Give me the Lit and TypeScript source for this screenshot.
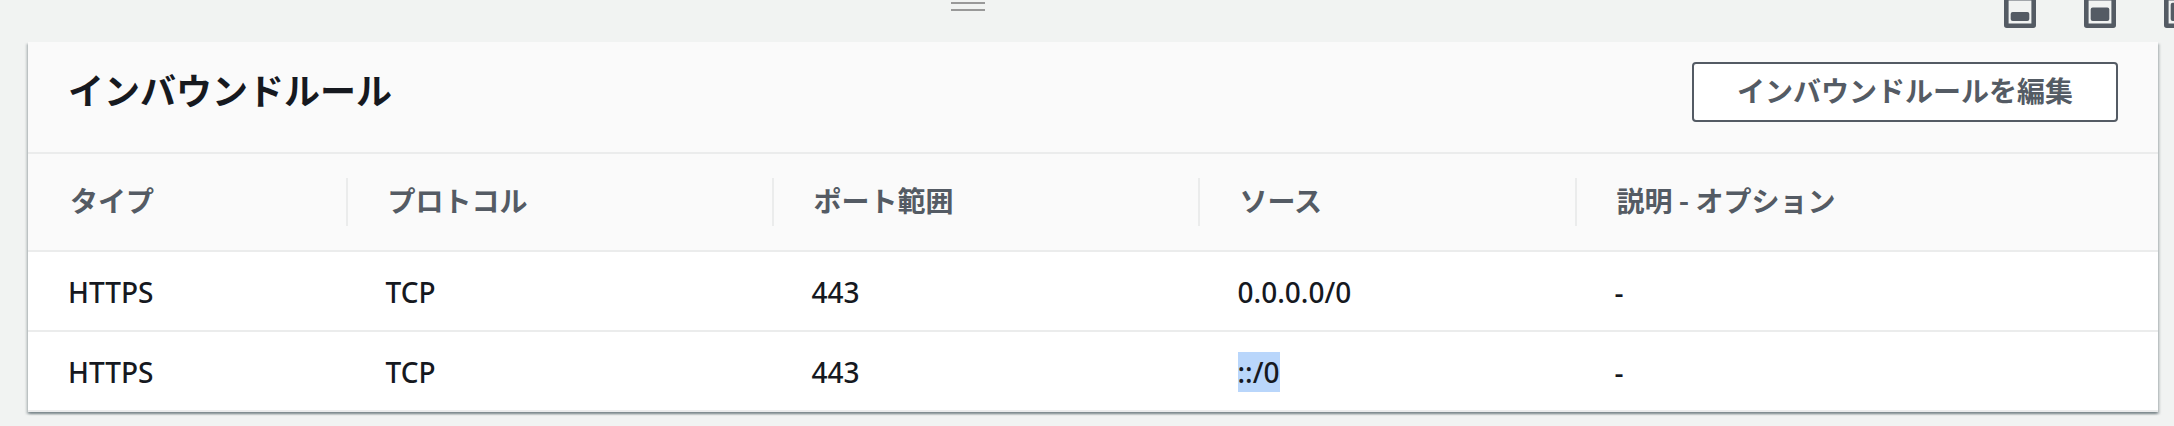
import { LitElement, html, css, svg } from "lit";
import { customElement, property } from "lit/decorators.js";

interface Rule {
  type: string;
  protocol: string;
  port: string;
  source: string;
  description: string;
  selected?: boolean;
}

const rules: Rule[] = [
  { type: "HTTPS", protocol: "TCP", port: "443", source: "0.0.0.0/0", description: "-" },
  { type: "HTTPS", protocol: "TCP", port: "443", source: "::/0", description: "-", selected: true },
];

const columns = ["タイプ", "プロトコル", "ポート範囲", "ソース", "説明 - オプション"];

/** Bar at the top of the split panel: drag handle and panel size buttons. */
@customElement("split-panel-bar")
export class SplitPanelBar extends LitElement {
  static styles = css`
    :host {
      display: grid;
      grid-template-columns: minmax(0, 1fr) 238px;
      height: 42px;
      overflow: hidden;
      background: #f1f3f2;
      position: relative;
      z-index: 1;
    }
    .handle {
      justify-self: center;
      width: 34px;
      height: 9px;
      margin: 2px 0 0;
      padding: 0;
      box-sizing: border-box;
      border: solid #999;
      border-width: 2px 0;
      border-radius: 0;
      background: none;
      cursor: row-resize;
    }
    .sizes {
      display: flex;
      align-items: flex-end;
      gap: 48px;
      height: 28px;
      padding-left: 68px;
      min-width: 0;
    }
    .size {
      flex: none;
      width: 32px;
      height: 32px;
      padding: 0;
      border: 0;
      background: none;
      color: #545b64;
      cursor: pointer;
    }
    .icon {
      display: block;
      width: 32px;
      height: 32px;
    }
  `;

  private sizeButton(label: string, top: number) {
    return html`<button class="size" type="button" aria-label=${label}>
      <svg class="icon" viewBox="0 0 32 32" aria-hidden="true">
        <rect x="2.3" y="2.3" width="27.4" height="27.4" rx="0.5" fill="none" stroke="currentColor" stroke-width="4.6" />
        ${svg`<rect x="6.7" y=${top} width="18.6" height=${25 - top} rx="2" fill="currentColor" />`}
      </svg>
    </button>`;
  }

  render() {
    return html`
      <button class="handle" type="button" aria-label="パネルのサイズを変更"></button>
      <div class="sizes">
        ${this.sizeButton("小", 16)} ${this.sizeButton("中", 11.4)} ${this.sizeButton("大", 6.8)}
      </div>
    `;
  }
}

/** Card that lists the inbound rules of a security group. */
@customElement("inbound-rules")
export class InboundRules extends LitElement {
  @property({ attribute: false }) rules: Rule[] = [];

  static styles = css`
    :host {
      display: block;
      background: #fff;
      box-shadow:
        0 2px 2px 0 rgba(0, 28, 36, 0.3),
        2px 2px 2px 0 rgba(0, 28, 36, 0.15),
        -2px 2px 2px 0 rgba(0, 28, 36, 0.15);
    }
    .header {
      display: flex;
      align-items: center;
      justify-content: space-between;
      padding: 20px 40px 30px;
      background: #fafafa;
      border-bottom: 2px solid #ebecec;
    }
    .title {
      margin: 0;
      font-size: 36px;
      line-height: 44px;
      font-weight: 700;
    }
    .edit {
      height: 60px;
      box-sizing: border-box;
      padding: 6px 43px 10px;
      border: 2px solid #545b64;
      border-radius: 4px;
      background: #fff;
      color: #545b64;
      font-family: "Noto Sans CJK JP", sans-serif;
      font-size: 28px;
      font-weight: 700;
      line-height: 40px;
      white-space: nowrap;
      cursor: pointer;
    }
    .table {
      width: 100%;
      table-layout: fixed;
      border-collapse: separate;
      border-spacing: 0;
    }
    .col-type {
      width: 15%;
    }
    .col-wide {
      width: 20%;
    }
    .col-source {
      width: 17.7%;
    }
    .head {
      padding: 24px 0;
      background: #fafafa;
      border-bottom: 2px solid #ebecec;
      color: #545b64;
      font-family: "Noto Sans CJK JP", sans-serif;
      font-weight: 700;
      text-align: left;
    }
    .label {
      display: block;
      height: 48px;
      padding: 0 40px;
      line-height: 44px;
      border-right: 2px solid #ebecec;
    }
    .head:first-child .label {
      padding-left: 42px;
    }
    .head:last-child .label {
      border-right: 0;
    }
    .cell {
      padding: 20px 38px 18px;
      border-bottom: 2px solid #ebecec;
      font-weight: 500;
      line-height: 40px;
      vertical-align: top;
    }
    .cell:first-child {
      padding-left: 40px;
    }
    .value {
      display: block;
      width: fit-content;
      background: none;
      color: inherit;
    }
    .selected {
      background: #b9d6fb;
    }
  `;

  render() {
    return html`
      <div class="header">
        <h2 class="title" id="title">インバウンドルール</h2>
        <button class="edit" type="button">インバウンドルールを編集</button>
      </div>
      <table class="table" aria-labelledby="title">
        <colgroup>
          <col class="col-type" />
          <col class="col-wide" />
          <col class="col-wide" />
          <col class="col-source" />
          <col />
        </colgroup>
        <thead>
          <tr>
            ${columns.map((c) => html`<th class="head" scope="col"><span class="label">${c}</span></th>`)}
          </tr>
        </thead>
        <tbody>
          ${this.rules.map(
            (r) => html`<tr>
              <td class="cell">${r.type}</td>
              <td class="cell">${r.protocol}</td>
              <td class="cell">${r.port}</td>
              <td class="cell">
                ${r.selected ? html`<mark class="value selected">${r.source}</mark>` : r.source}
              </td>
              <td class="cell">${r.description}</td>
            </tr>`,
          )}
        </tbody>
      </table>
    `;
  }
}

@customElement("app-root")
export class AppRoot extends LitElement {
  static styles = css`
    :host {
      display: block;
      box-sizing: border-box;
      min-height: 100vh;
      background: #f1f3f2;
      color: #16191f;
      font-family: "Noto Sans", "Noto Sans CJK JP", sans-serif;
      font-size: 28px;
      line-height: 40px;
    }
    .content {
      padding: 0 16px 14px 28px;
    }
  `;

  render() {
    return html`
      <split-panel-bar></split-panel-bar>
      <main class="content">
        <inbound-rules .rules=${rules}></inbound-rules>
      </main>
    `;
  }
}
